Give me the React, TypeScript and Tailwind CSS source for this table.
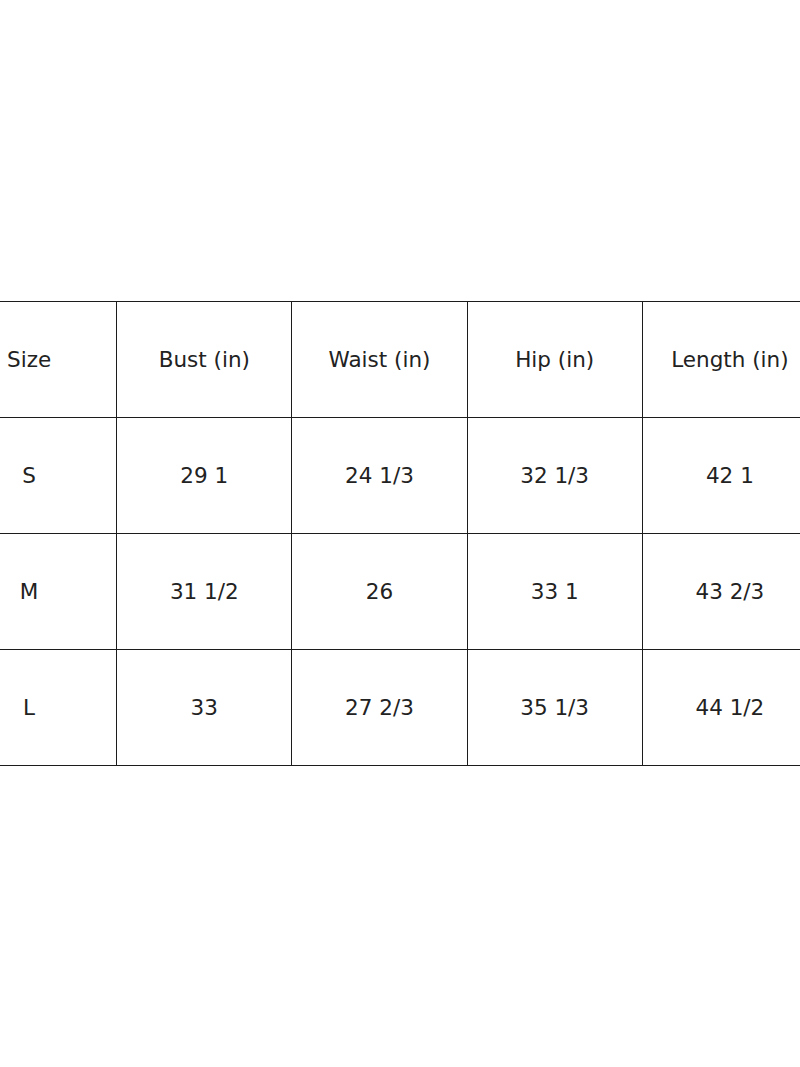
const headers = ['Size', 'Bust (in)', 'Waist (in)', 'Hip (in)', 'Length (in)']

const rows = [
  ['S', '29 1', '24 1/3', '32 1/3', '42 1'],
  ['M', '31 1/2', '26', '33 1', '43 2/3'],
  ['L', '33', '27 2/3', '35 1/3', '44 1/2'],
]

export default function App() {
  return (
    <div
      className="h-[1067px] w-[800px] overflow-hidden bg-white pt-[301px] text-[#222]"
      style={{ fontFamily: '"DejaVu Sans", Verdana, sans-serif' }}
    >
      <table className="ml-[-59px] w-[877px] table-fixed border-collapse text-[21.5px]">
        <thead>
          <tr>
            {headers.map((h) => (
              <th key={h} className="h-[116px] border border-[#1c1c1c] pt-[1px] text-center font-normal">
                {h}
              </th>
            ))}
          </tr>
        </thead>
        <tbody>
          {rows.map((row) => (
            <tr key={row[0]}>
              {row.map((cell, i) => (
                <td key={i} className="h-[116px] border border-[#1c1c1c] pt-[1px] text-center">
                  {cell}
                </td>
              ))}
            </tr>
          ))}
        </tbody>
      </table>
    </div>
  )
}
